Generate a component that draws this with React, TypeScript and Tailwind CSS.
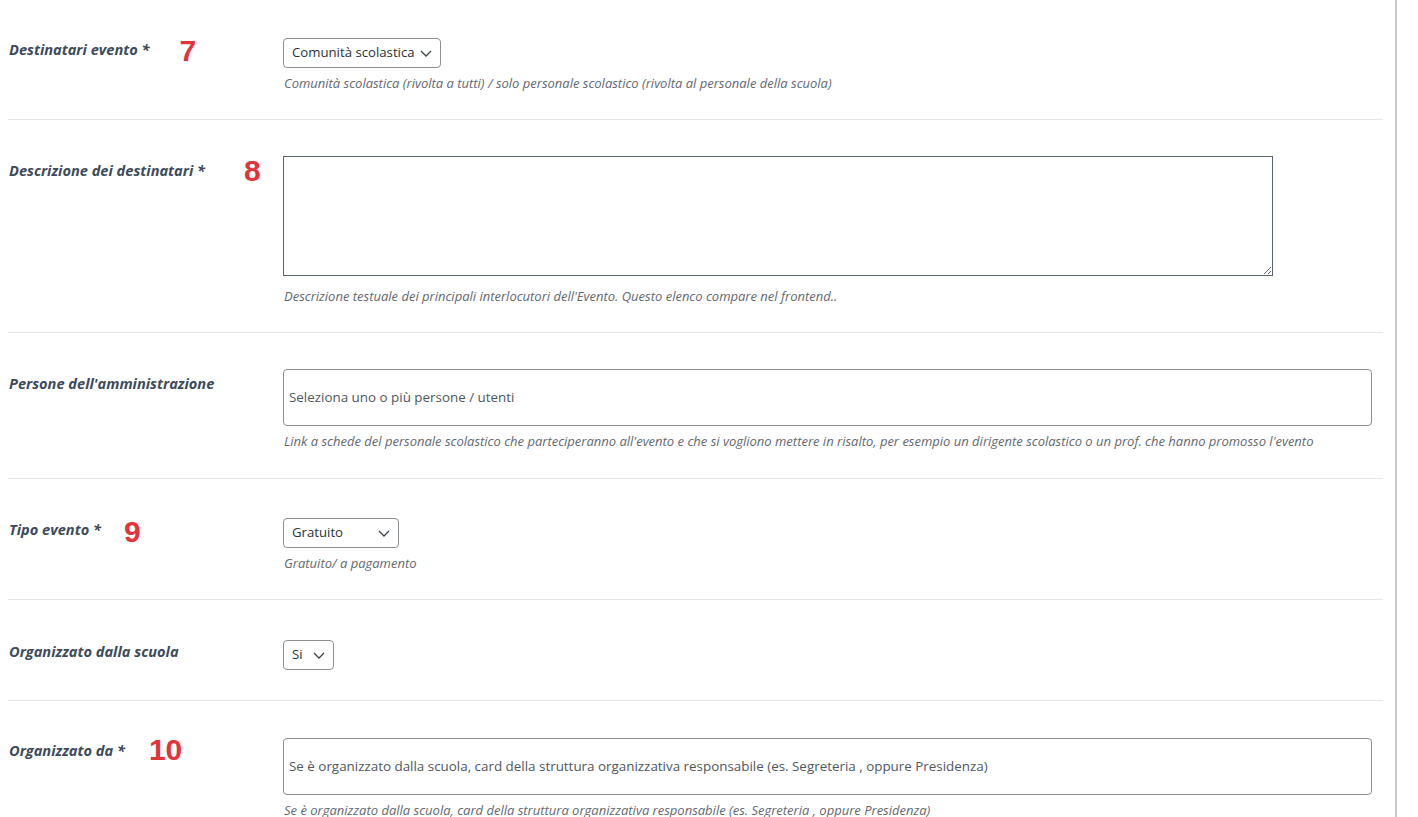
import React from 'react';

const font = { fontFamily: '"Open Sans", "Noto Sans", sans-serif' };

const Chevron = () => (
  <svg width="12" height="7" viewBox="0 0 12 7" fill="none" stroke="#3c434a" strokeWidth="1.3" className="shrink-0">
    <path d="M1 1l5 5 5-5" />
  </svg>
);

const Select = ({ value, width }: { value: string; width: string }) => (
  <div className={`${width} h-[30px] border border-[#8c8f94] rounded-[4px] flex items-center justify-between pl-2 pr-[8px] bg-white`}>
    <span className="text-[13.2px] text-[#2c3338] leading-none whitespace-nowrap">{value}</span>
    <Chevron />
  </div>
);

const Help = ({ children, mt = 'mt-[7px]' }: { children: React.ReactNode; mt?: string }) => (
  <p className={`text-[13px] italic text-[#646970] ${mt} pl-px leading-[16px] whitespace-nowrap`}>{children}</p>
);

const Num = ({ n, cls }: { n: string; cls: string }) => (
  <span
    className={`${cls} relative text-[30px] font-bold text-[#e3333b] leading-none`}
    style={{ fontFamily: '"Liberation Sans", Arial, sans-serif' }}
  >
    {n}
  </span>
);

const Label = ({ text, pt, children }: { text: string; pt: string; children?: React.ReactNode }) => (
  <div className={`w-[275px] shrink-0 self-start flex items-center ${pt}`}>
    <span className="text-[14.6px] font-bold italic text-[#3d4b5b] pl-px leading-[20px] whitespace-nowrap">{text}</span>
    {children}
  </div>
);

export default function App() {
  return (
    <div className="bg-white min-h-screen" style={font}>
      <div className="w-[1397px] min-h-[817px] border-r-2 border-[#c8c8c8] pl-2 pr-3">
        {/* 7 */}
        <div className="flex h-[120px] pt-[38px] border-b border-[#e6e6e6]">
          <Label text="Destinatari evento *" pt="-mt-[4px]">
            <Num n="7" cls="ml-[30px] top-[2px]" />
          </Label>
          <div>
            <Select value="Comunità scolastica" width="w-[158px]" />
            <Help>Comunità scolastica (rivolta a tutti) / solo personale scolastico (rivolta al personale della scuola)</Help>
          </div>
        </div>

        {/* 8 */}
        <div className="flex h-[213px] pt-[36px] border-b border-[#e6e6e6]">
          <Label text="Descrizione dei destinatari *" pt="-mt-[1px]">
            <Num n="8" cls="ml-[39px] top-[1px]" />
          </Label>
          <div>
            <textarea className="block w-[990px] h-[120px] border border-[#5a6470] bg-white outline-none" />
            <Help mt="mt-[12px]">Descrizione testuale dei principali interlocutori dell'Evento. Questo elenco compare nel frontend..</Help>
          </div>
        </div>

        {/* persone */}
        <div className="flex h-[146px] pt-[36px] border-b border-[#e6e6e6]">
          <Label text="Persone dell'amministrazione" pt="pt-[4px]" />
          <div>
            <div className="w-[1089px] h-[57px] border border-[#8c8f94] rounded-[4px] flex items-center pl-[5px]">
              <span className="text-[13.4px] text-[#50575e] whitespace-nowrap">Seleziona uno o più persone / utenti</span>
            </div>
            <Help>Link a schede del personale scolastico che parteciperanno all'evento e che si vogliono mettere in risalto, per esempio un dirigente scolastico o un prof. che hanno promosso l'evento</Help>
          </div>
        </div>

        {/* 9 */}
        <div className="flex h-[121px] pt-[39px] border-b border-[#e6e6e6]">
          <Label text="Tipo evento *" pt="-mt-[4px]">
            <Num n="9" cls="ml-[23px] top-[3px]" />
          </Label>
          <div>
            <Select value="Gratuito" width="w-[116px]" />
            <Help>Gratuito/ a pagamento</Help>
          </div>
        </div>

        {/* organizzato dalla scuola */}
        <div className="flex h-[101px] pt-[40px] border-b border-[#e6e6e6]">
          <Label text="Organizzato dalla scuola" pt="pt-[1px]" />
          <div>
            <Select value="Si" width="w-[51px]" />
          </div>
        </div>

        {/* 10 */}
        <div className="flex pt-[37px]">
          <Label text="Organizzato da *" pt="-mt-[3px]">
            <Num n="10" cls="ml-[24px] top-[0px]" />
          </Label>
          <div>
            <div className="w-[1089px] h-[57px] border border-[#8c8f94] rounded-[4px] flex items-center pl-[5px]">
              <span className="text-[13.4px] text-[#50575e] whitespace-nowrap">Se è organizzato dalla scuola, card della struttura organizzativa responsabile (es. Segreteria , oppure Presidenza)</span>
            </div>
            <Help>Se è organizzato dalla scuola, card della struttura organizzativa responsabile (es. Segreteria , oppure Presidenza)</Help>
          </div>
        </div>
      </div>
    </div>
  );
}
